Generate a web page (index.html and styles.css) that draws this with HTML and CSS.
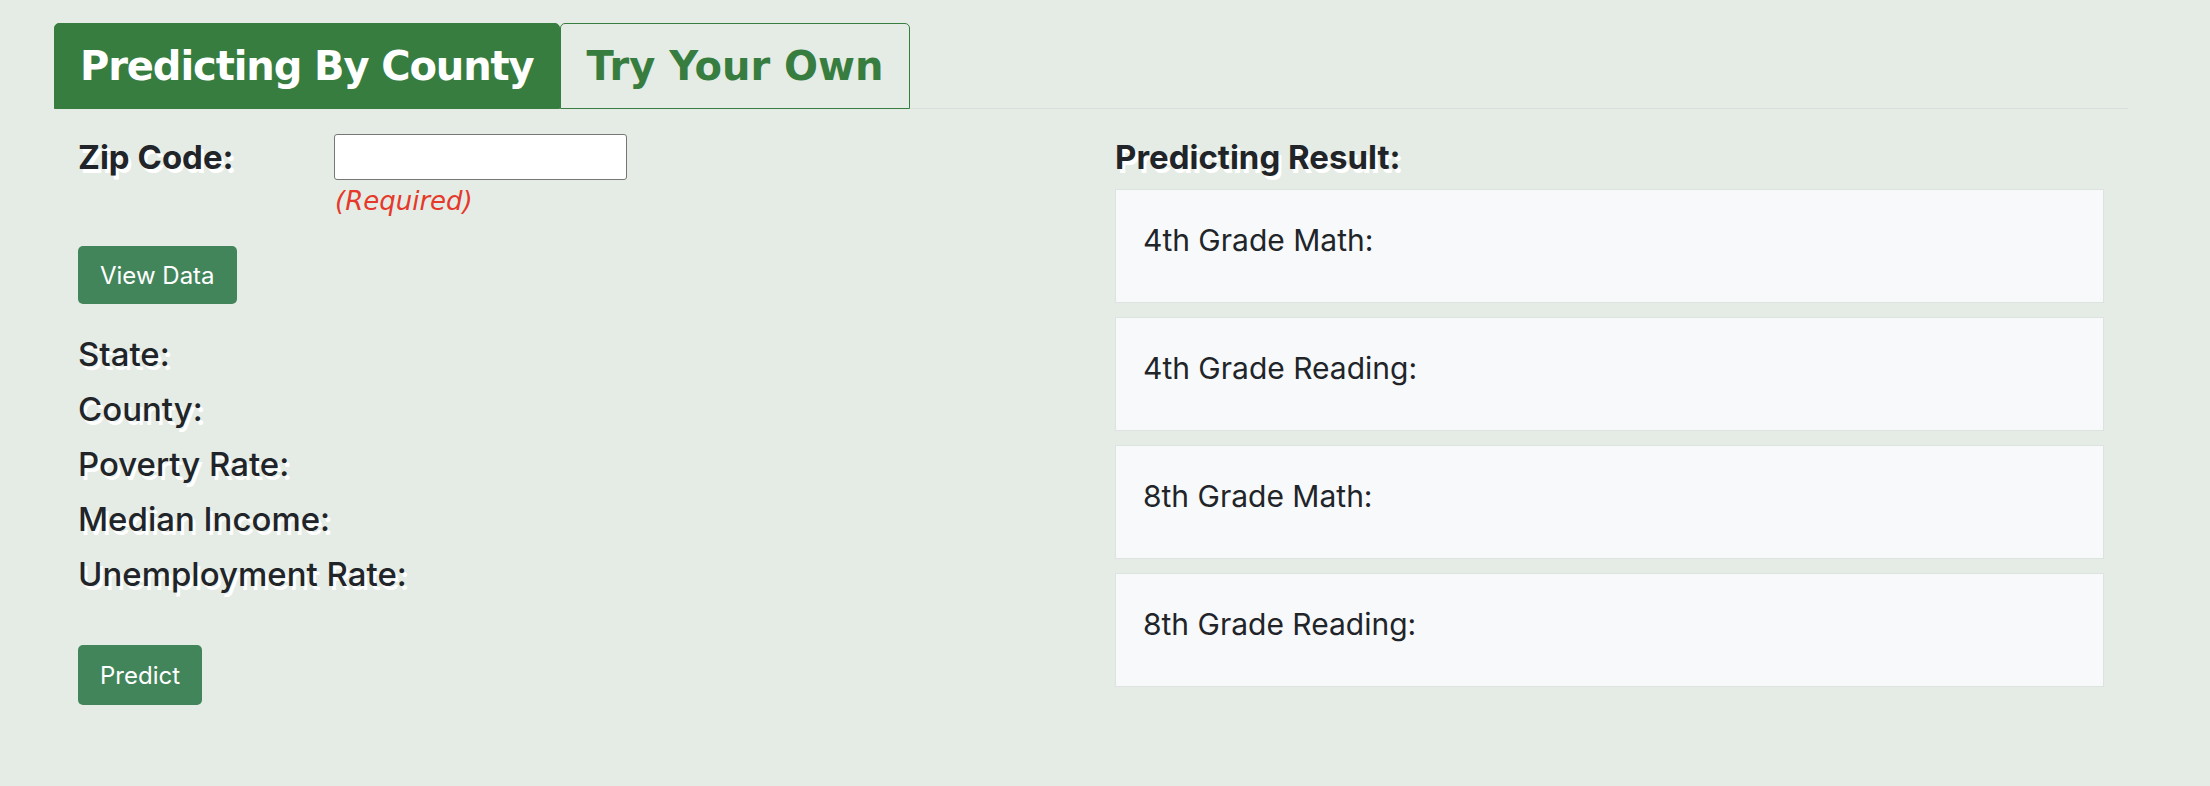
FILE: index.html
```html
<!DOCTYPE html>
<html>
<head>
<meta charset="utf-8">
<link rel="stylesheet" href="styles.css">
</head>
<body>
<div class="container">
  <div class="tabs">
    <div class="tab active">Predicting By County</div>
    <div class="tab other">Try Your Own</div>
  </div>
  <div class="row">
    <div class="col left">
      <div class="zip-row">
        <label class="label strong" for="zip">Zip Code:</label>
        <input id="zip" class="zip-input" type="text">
      </div>
      <div class="required">(Required)</div>
      <button class="btn view-btn">View Data</button>
      <div class="facts">
        <div class="label fact">State:</div>
        <div class="label fact">County:</div>
        <div class="label fact">Poverty Rate:</div>
        <div class="label fact">Median Income:</div>
        <div class="label fact">Unemployment Rate:</div>
      </div>
      <button class="btn predict-btn">Predict</button>
    </div>
    <div class="col right">
      <div class="label strong result-title">Predicting Result:</div>
      <div class="cards">
        <div class="card">4th Grade Math:</div>
        <div class="card">4th Grade Reading:</div>
        <div class="card">8th Grade Math:</div>
        <div class="card">8th Grade Reading:</div>
      </div>
    </div>
  </div>
</div>
</body>
</html>
```
FILE: styles.css
```css
body {
  margin: 0;
  background: #e5ece5;
  font-family: Inter, "Noto Sans", sans-serif;
  color: #212529;
}
.container {
  margin-left: 54px;
  width: 2074px;
  padding-top: 23px;
}
.tabs {
  display: flex;
  border-bottom: 1px solid #d9dfdc;
}
.tab {
  font-family: "DejaVu Sans", Verdana, sans-serif;
  font-weight: bold;
  font-size: 40px;
  line-height: 44px;
  padding: 20px 25px;
  border: 1px solid #377d3f;
  border-radius: 5px 5px 0 0;
  margin-bottom: -1px;
  color: #377d3f;
}
.tab.active {
  background: #377d3f;
  color: #ffffff;
  letter-spacing: -1.1px;
}
.tab.other {
  padding: 20px 25px 20px 26px;
}
.row {
  display: flex;
}
.col {
  flex: 1;
  padding: 0 24px;
}
.label {
  font-size: 33px;
  font-weight: 500;
  text-shadow: 3px 4px 0 #ffffff;
  color: #212529;
}
.label.strong {
  font-weight: 700;
}
.zip-row {
  display: flex;
  align-items: center;
  margin-top: 25px;
}
.zip-row .label {
  width: 256px;
  flex: none;
}
.zip-input {
  width: 293px;
  height: 46px;
  box-sizing: border-box;
  border: 1px solid #767676;
  border-radius: 3px;
  background: #fff;
  margin: 0;
}
.required {
  margin-left: 257px;
  font-family: "DejaVu Sans", Verdana, sans-serif;
  font-style: italic;
  font-size: 26px;
  line-height: 30px;
  color: #e5392b;
  margin-top: 6px;
}
.btn {
  display: block;
  border: none;
  border-radius: 5px;
  background: #42855b;
  color: #fff;
  font-family: Inter, "Noto Sans", sans-serif;
  font-size: 24px;
  padding: 0 22px;
  height: 58px;
}
.view-btn {
  margin-top: 30px;
}
.facts {
  margin-top: 23px;
}
.fact {
  line-height: 55px;
}
.predict-btn {
  margin-top: 43px;
  height: 60px;
}
.result-title {
  margin-top: 25px;
  line-height: 46px;
}
.cards {
  margin-top: 9px;
  display: flex;
  flex-direction: column;
  gap: 14px;
}
.card {
  height: 114px;
  box-sizing: border-box;
  background: #f8f9fa;
  border: 1px solid #dde3e0;
  display: flex;
  align-items: center;
  padding: 0 27px 12px;
  font-size: 30px;
}
```
